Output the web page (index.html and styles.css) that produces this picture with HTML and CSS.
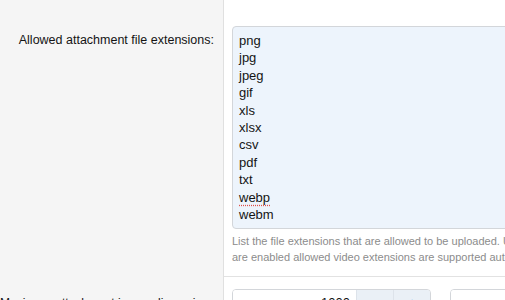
FILE: index.html
```html
<!DOCTYPE html>
<html lang="en">
<head>
<meta charset="utf-8">
<title>Attachment options</title>
<link rel="stylesheet" href="styles.css">
</head>
<body>
<div class="form">
  <div class="row">
    <div class="label label-first">Allowed attachment file extensions:</div>
    <div class="field field-first">
      <div class="textarea" role="textbox" aria-multiline="true">
        <div>png</div>
        <div>jpg</div>
        <div>jpeg</div>
        <div>gif</div>
        <div>xls</div>
        <div>xlsx</div>
        <div>csv</div>
        <div>pdf</div>
        <div>txt</div>
        <div><span class="misspelled">webp</span></div>
        <div>webm</div>
      </div>
      <div class="explain">
        <span class="explain-line">List the file extensions that are allowed to be uploaded. Use spaces or line breaks between extensions. If video embeds</span>
        <span class="explain-line">are enabled allowed video extensions are supported automatically.</span>
      </div>
    </div>
  </div>
  <div class="row">
    <div class="label label-second">Maximum attachment image dimensions:</div>
    <div class="field field-second">
      <div class="input-group">
        <div class="num">1000</div>
        <div class="btn">−</div>
        <div class="btn">+</div>
      </div>
      <div class="splitter">×</div>
      <div class="input-group">
        <div class="num">1000</div>
        <div class="btn">−</div>
        <div class="btn">+</div>
      </div>
    </div>
  </div>
</div>
</body>
</html>
```

FILE: styles.css
```css
html, body {
  margin: 0;
  padding: 0;
  overflow: hidden;
  background: #fff;
}
body {
  width: 505px;
  height: 300px;
  font-family: "Liberation Sans", Arial, Helvetica, sans-serif;
  color: #141414;
}
.form {
  width: 505px;
}
.row {
  display: grid;
  grid-template-columns: 224px 281px;
}
.label {
  background: #f5f5f5;
  border-right: 1px solid #e0e0e0;
  text-align: right;
  font-size: 12.5px;
  line-height: 17px;
  padding-right: 9px;
  white-space: nowrap;
}
.label-first {
  padding-top: 32px;
}
.label-second {
  padding-top: 18px;
  font-size: 12px;
}
.field {
  padding-left: 8px;
  overflow: hidden;
}
.field-first {
  padding-top: 26px;
  padding-bottom: 11px;
  border-bottom: 1px solid #e2e2e2;
}
.textarea {
  width: 420px;
  height: 191px;
  box-sizing: content-box;
  background: #edf4fc;
  border: 1px solid #d3d6da;
  border-radius: 4px;
  padding: 5px 6px;
  font-size: 13px;
  line-height: 17.4px;
  color: #141414;
}
.misspelled {
  text-decoration: underline dotted #e0504a;
  text-underline-offset: 3px;
}
.explain {
  margin-top: 4px;
  font-size: 11px;
  line-height: 16px;
  color: #8c8c8c;
}
.explain-line {
  display: block;
  white-space: nowrap;
}
.field-second {
  padding-top: 12px;
  padding-bottom: 12px;
  display: flex;
  align-items: flex-start;
  gap: 8px;
}
.input-group {
  display: flex;
  flex: 0 0 auto;
  width: 199px;
  height: 30px;
  box-sizing: border-box;
  border: 1px solid #d3d6da;
  border-radius: 4px;
  overflow: hidden;
  font-size: 13px;
  line-height: 17px;
}
.num {
  flex: 1;
  background: #fff;
  text-align: right;
  padding: 4px 6px 0 0;
}
.btn {
  width: 36px;
  background: #eaf0f6;
  border-left: 1px solid #dde3ea;
  text-align: center;
  padding-top: 4px;
  color: #47a7eb;
}
.splitter {
  font-size: 13px;
  padding-top: 9px;
  width: 3px;
}
```
